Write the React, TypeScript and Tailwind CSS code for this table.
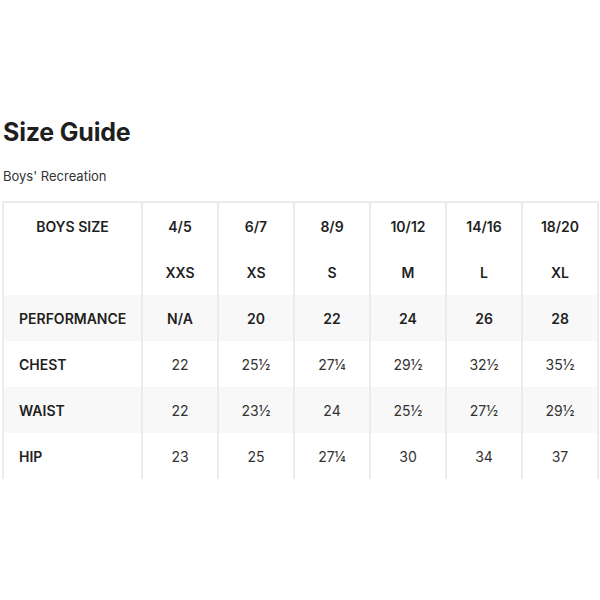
const sizes = ['4/5', '6/7', '8/9', '10/12', '14/16', '18/20'];
const letters = ['XXS', 'XS', 'S', 'M', 'L', 'XL'];

const rows: { label: string; values: string[]; bold?: boolean; shaded?: boolean }[] = [
    { label: 'PERFORMANCE', values: ['N/A', '20', '22', '24', '26', '28'], bold: true, shaded: true },
    { label: 'CHEST', values: ['22', '25½', '27¼', '29½', '32½', '35½'] },
    { label: 'WAIST', values: ['22', '23½', '24', '25½', '27½', '29½'], shaded: true },
    { label: 'HIP', values: ['23', '25', '27¼', '30', '34', '37'] },
];

export default function App() {
    return (
        <div className="w-[600px] h-[600px] bg-white text-[#1f1f1f] font-['Inter',sans-serif] pt-[117px] pl-[2px]">
            <h1 className="text-[25px] font-bold leading-[30px] tracking-[-0.2px] pl-[1px]">Size Guide</h1>
            <p className="text-[13px] leading-[16px] mt-[21px] pl-[1px] text-[#333]">Boys' Recreation</p>

            <table className="mt-[17px] w-[595px] border-collapse table-fixed text-[14px]">
                <colgroup>
                    <col className="w-[139px]" />
                    {sizes.map((s) => <col key={s} className="w-[76px]" />)}
                </colgroup>
                <tbody>
                    <tr className="h-[47px] border-t-2 border-[#ececec]">
                        <td className="border-l-2 border-[#ececec] text-center font-semibold">BOYS SIZE</td>
                        {sizes.map((s) => (
                            <td key={s} className="border-l-2 border-r-2 border-[#ececec] text-center font-semibold">{s}</td>
                        ))}
                    </tr>
                    <tr className="h-[46px]">
                        <td className="border-l-2 border-[#ececec]"></td>
                        {letters.map((l) => (
                            <td key={l} className="border-l-2 border-r-2 border-[#ececec] text-center font-semibold">{l}</td>
                        ))}
                    </tr>
                    {rows.map((r) => (
                        <tr key={r.label} className={`h-[46px] ${r.shaded ? 'bg-[#f8f8f8]' : 'bg-white'}`}>
                            <td className="border-l-2 border-[#ececec] pl-[15px] font-semibold">{r.label}</td>
                            {r.values.map((v, i) => (
                                <td
                                    key={i}
                                    className={`border-l-2 border-r-2 border-[#ececec] text-center ${r.bold ? 'font-semibold' : 'font-normal text-[#333]'}`}
                                >
                                    {v}
                                </td>
                            ))}
                        </tr>
                    ))}
                </tbody>
            </table>
        </div>
    );
}
